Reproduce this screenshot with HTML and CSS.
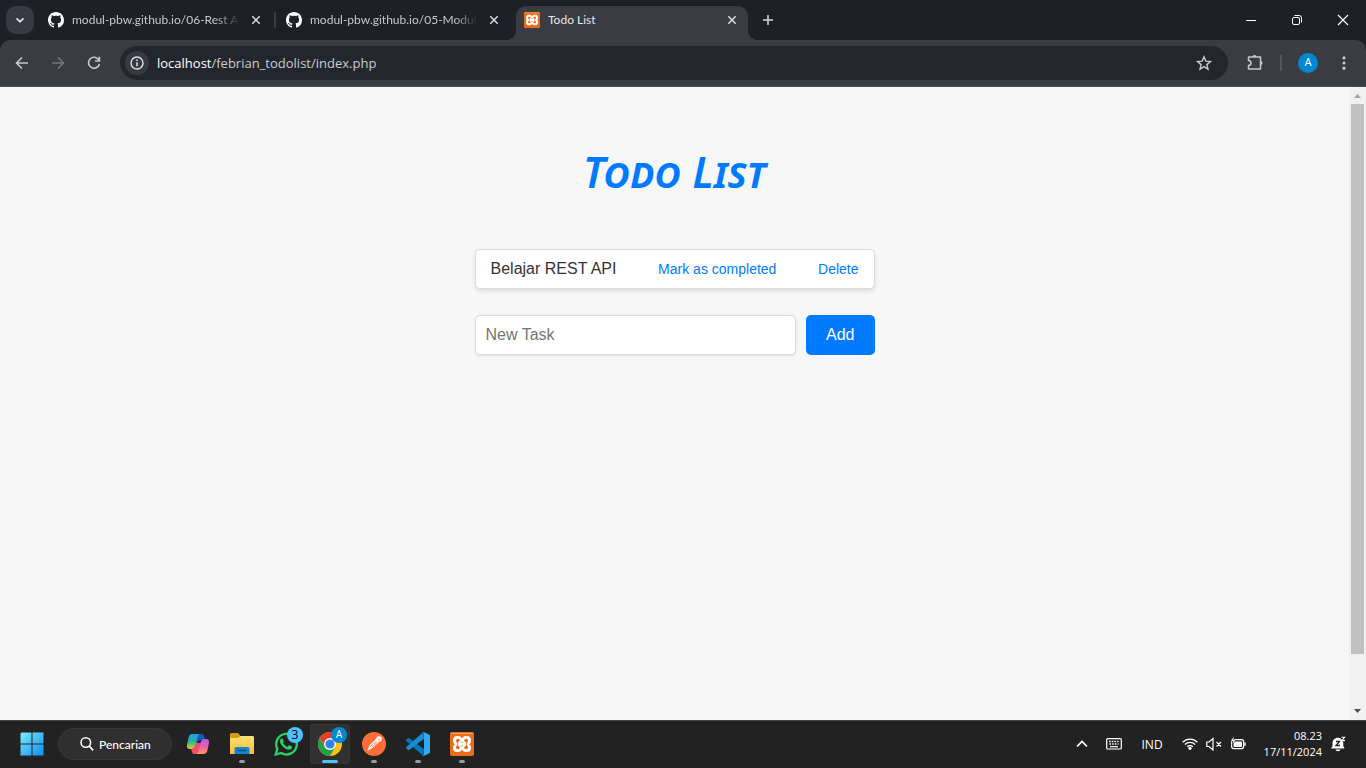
FILE: index.html
```html
<!DOCTYPE html>
<html lang="id">
<head>
<meta charset="utf-8">
<meta name="viewport" content="width=device-width, initial-scale=1">
<title>Todo List</title>
<link rel="stylesheet" href="styles.css">
</head>
<body class="desktop">
<svg class="sprite" aria-hidden="true">
  <defs>
    <linearGradient id="win" x1="0" y1="0" x2="1" y2="1"><stop offset="0" stop-color="#7bebff"/><stop offset="1" stop-color="#0d8ff0"/></linearGradient>
    <linearGradient id="cpa" x1="0" y1="0" x2="0" y2="1"><stop offset="0" stop-color="#1f9df0"/><stop offset=".5" stop-color="#27b59b"/><stop offset="1" stop-color="#efc51c"/></linearGradient>
    <linearGradient id="cpb" x1="0" y1="0" x2="0" y2="1"><stop offset="0" stop-color="#ad5df0"/><stop offset=".5" stop-color="#ec5ca8"/><stop offset="1" stop-color="#fb9a5a"/></linearGradient>
    <linearGradient id="fold" x1="0" y1="0" x2="0" y2="1"><stop offset="0" stop-color="#ffe07a"/><stop offset="1" stop-color="#f9bd2e"/></linearGradient>
  </defs>
  <symbol id="github" viewBox="0 0 16 16"><path fill="#fff" d="M8 0C3.58 0 0 3.58 0 8c0 3.54 2.29 6.53 5.47 7.59.4.07.55-.17.55-.38 0-.19-.01-.82-.01-1.49-2.01.37-2.53-.49-2.69-.94-.09-.23-.48-.94-.82-1.13-.28-.15-.68-.52-.01-.53.63-.01 1.08.58 1.23.82.72 1.21 1.87.87 2.33.66.07-.52.28-.87.51-1.07-1.78-.2-3.64-.89-3.64-3.95 0-.87.31-1.59.82-2.15-.08-.2-.36-1.02.08-2.12 0 0 .67-.21 2.2.82.64-.18 1.32-.27 2-.27s1.36.09 2 .27c1.53-1.04 2.2-.82 2.2-.82.44 1.1.16 1.92.08 2.12.51.56.82 1.27.82 2.15 0 3.07-1.87 3.75-3.65 3.95.29.25.54.73.54 1.48 0 1.07-.01 1.93-.01 2.2 0 .21.15.46.55.38A8.01 8.01 0 0 0 16 8c0-4.42-3.58-8-8-8z"/></symbol>
  <symbol id="close" viewBox="0 0 16 16"><path d="M4.300 4.300l7.400 7.400M11.700 4.300l-7.400 7.400" stroke="currentColor" stroke-width="1.500" fill="none"/></symbol>
  <symbol id="xampp" viewBox="0 0 24 24"><rect width="24" height="24" rx="2" fill="#e96c16"/><path d="M1 1.500h22" stroke="#f6a469"/><path fill="none" stroke="#fff" stroke-width="3" stroke-linejoin="round" d="M12 8.500L10.400 6.500Q9.700 5.500 8.500 5.500H7Q4.500 5.500 4.500 8.500 4.500 10.500 6 12 4.500 13.500 4.500 15.500 4.500 18.500 7 18.500H8.500Q9.700 18.500 10.400 17.500L12 15.500 13.600 17.500Q14.300 18.500 15.500 18.500H17Q19.500 18.500 19.500 15.500 19.500 13.500 18 12 19.500 10.500 19.500 8.500 19.500 5.500 17 5.500H15.500Q14.300 5.500 13.600 6.500zM9 9.500Q11 12 9 14.500M15 9.500Q13 12 15 14.500M10 12h4"/></symbol>
</svg>

<header class="tabstrip">
  <button class="tab-search" aria-label="Search tabs"><svg class="ic16" viewBox="0 0 16 16"><path d="M4.500 6.300L8 9.700l3.500-3.400" fill="none" stroke="#dcdde0" stroke-width="1.700"/></svg></button>
  <div class="tab divided">
    <svg class="ic16"><use href="#github"/></svg><span class="tab-title faded">modul-pbw.github.io/06-Rest A</span>
    <button class="tab-close" aria-label="Close tab"><svg class="ic16"><use href="#close"/></svg></button>
  </div>
  <div class="tab">
    <svg class="ic16"><use href="#github"/></svg><span class="tab-title faded">modul-pbw.github.io/05-Modul</span>
    <button class="tab-close" aria-label="Close tab"><svg class="ic16"><use href="#close"/></svg></button>
  </div>
  <div class="tab active">
    <svg class="ic16"><use href="#xampp"/></svg><span class="tab-title">Todo List</span>
    <button class="tab-close" aria-label="Close tab"><svg class="ic16"><use href="#close"/></svg></button>
  </div>
  <button class="new-tab" aria-label="New tab"><svg class="ic16" viewBox="0 0 16 16"><path d="M8 3v10M3 8h10" stroke="#d5d7db" stroke-width="1.500"/></svg></button>
  <div class="window-controls">
    <button aria-label="Minimize"><svg class="ic16" viewBox="0 0 16 16"><path d="M3 8.500h10" stroke="#fff"/></svg></button>
    <button aria-label="Restore"><svg class="ic16" viewBox="0 0 16 16" fill="none" stroke="#fff"><rect x="3.500" y="5.500" width="7" height="7" rx="1.500"/><path d="M5.500 3.500H10a2.500 2.500 0 0 1 2.500 2.500v4.500"/></svg></button>
    <button aria-label="Close window"><svg class="ic16" viewBox="0 0 16 16"><path d="M3 3l10 10M13 3L3 13" stroke="#fff" stroke-width="1.200"/></svg></button>
  </div>
</header>

<nav class="toolbar" aria-label="Browser toolbar">
  <button class="tool" aria-label="Back"><svg class="ic16" viewBox="0 0 16 16"><path d="M14 8H3M8 2.500L2.500 8 8 13.500" fill="none" stroke="#c7c9ce" stroke-width="1.600"/></svg></button>
  <button class="tool" aria-label="Forward"><svg class="ic16" viewBox="0 0 16 16"><path d="M2 8h11M8 2.500L13.500 8 8 13.500" fill="none" stroke="#74767c" stroke-width="1.600"/></svg></button>
  <button class="tool" aria-label="Reload"><svg class="ic16" viewBox="0 0 16 16"><path d="M12.700 4.800A5.500 5.500 0 1 0 13.400 9M13.400 1.800V6H9" fill="none" stroke="#c7c9ce" stroke-width="1.700"/></svg></button>
  <div class="omnibox">
    <button class="site-info" aria-label="Site information"><svg class="ic16" viewBox="0 0 16 16"><circle cx="8" cy="8" r="6" fill="none" stroke="#dfe0e3" stroke-width="1.400"/><path d="M8 7.200v4M8 4.500v1.500" stroke="#dfe0e3" stroke-width="1.500"/></svg></button>
    <a class="url" href="#"><span class="host">localhost</span>/febrian_todolist/index.php</a>
    <button class="star" aria-label="Bookmark"><svg class="ic16" viewBox="0 0 16 16"><path d="M8 1.800l1.800 4.300 4.700.4-3.600 3.100 1.100 4.600L8 11.700l-4 2.500 1.100-4.600-3.600-3.100 4.700-.4z" fill="none" stroke="#c7c9ce" stroke-width="1.400"/></svg></button>
  </div>
  <button class="tool" aria-label="Extensions"><svg class="ic18" viewBox="0 0 18 18"><path fill="none" stroke="#c7c9ce" stroke-width="1.500" stroke-linejoin="round" d="M2.500 3h12v12h-12v-3.500a2.300 2.300 0 0 0 0-5z"/><path fill="#c7c9ce" d="M6.500 3a2 2 0 0 1 4 0zM14.500 7a2 2 0 0 1 0 4z"/></svg></button>
  <span class="tool-divider"></span>
  <button class="profile" aria-label="Profile">A</button>
  <button class="tool menu" aria-label="Menu"><svg class="ic16" viewBox="0 0 16 16" fill="#c7c9ce"><circle cx="8" cy="2.800" r="1.600"/><circle cx="8" cy="8" r="1.600"/><circle cx="8" cy="13.200" r="1.600"/></svg></button>
</nav>

<div class="viewport">
  <main class="page">
    <h1 class="page-title">Todo List</h1>
    <ul class="tasks">
      <li class="task"><span class="task-name">Belajar REST API</span><a href="#">Mark as completed</a><a href="#">Delete</a></li>
    </ul>
    <form class="task-form">
      <input class="task-input" type="text" placeholder="New Task" aria-label="New Task">
      <button class="add" type="button">Add</button>
    </form>
  </main>
  <div class="scrollbar" aria-hidden="true">
    <svg class="arrow" viewBox="0 0 17 17"><path fill="#a3a3a3" d="M5 11l3.500-4 3.500 4z"/></svg>
    <span class="thumb"></span>
    <svg class="arrow" viewBox="0 0 17 17"><path fill="#505050" d="M5 6l3.500 4L12 6z"/></svg>
  </div>
</div>

<footer class="taskbar">
  <button class="app" aria-label="Start"><svg class="ic24" viewBox="0 0 24 24"><path fill="url(#win)" d="M1.500 .5h10v11H.5v-10zM12.500.5h11v11h-11zM.5 12.500h11v11h-11zM12.500 12.500h11v11h-11z"/></svg></button>
  <button class="search"><svg class="ic16" viewBox="0 0 16 16"><circle cx="6.800" cy="6.500" r="4.800" fill="none" stroke="#fff" stroke-width="1.500"/><path d="M10.200 10l4 4.300" stroke="#fff" stroke-width="1.700"/></svg><span>Pencarian</span></button>
  <button class="app" aria-label="Copilot"><svg class="ic24" viewBox="0 0 24 24"><path fill="#1657c8" d="M10 2h5.500c1.400 0 2.200.8 2.600 2.200L19 8h-4c-2 0-3 1-3.600 3L10 15H7z"/><path fill="url(#cpa)" d="M6.500 2H14c-1.400.2-2 1.400-2.400 2.800L9.200 14c-.5 1.800-1.500 3-3.500 3H4c-2.600 0-3.500-1.800-3-4l1.600-7.500C3.100 3.200 4.400 2 6.500 2z"/><path fill="#f0506e" d="M14 22H8.500c-1.400 0-2.200-.8-2.600-2.200L5.300 17c2.200 0 3.400-1 3.900-3l1-3H17z"/><path fill="url(#cpb)" d="M17.500 22H10c1.400-.2 2-1.400 2.400-2.800L14.800 10c.5-1.800 1.500-3 3.500-3H20c2.600 0 3.500 1.800 3 4l-1.600 7.500c-.5 2.300-1.800 3.500-3.900 3.500z"/></svg></button>
  <button class="app running" aria-label="File Explorer"><svg class="ic24" viewBox="0 0 24 24"><path fill="#d89a10" d="M0 2.500C0 1.700.7 1 1.500 1H8l2.500 3v3H0z"/><path fill="url(#fold)" d="M0 6h8l2.500-2H22.500c.9 0 1.500.6 1.500 1.500V22H0z"/><path fill="#1684d5" d="M4.500 22v-4.500c0-2 .8-2.500 2.500-2.500h10c1.700 0 2.500.5 2.500 2.500V22z"/><path stroke="#0c4d91" stroke-width="1.500" d="M7.500 18.500h9"/></svg></button>
  <button class="app" aria-label="WhatsApp"><svg class="ic24" viewBox="0 0 24 24"><path fill="none" stroke="#28d366" stroke-width="2.300" d="M1.700 22.500l1.600-5.700A10.300 10.300 0 1 1 7.200 21z"/><path fill="#28d366" d="M17.500 14.300c-.3-.2-1.800-.9-2.100-1-.3-.1-.5-.1-.7.200l-.9 1.200c-.2.200-.4.200-.7.100-1.800-.8-3.100-1.900-4.100-3.700-.2-.4.100-.5.800-1.400.1-.2 0-.4 0-.5L8.900 7c-.3-.6-.5-.5-.7-.5-.6 0-1 0-1.400.5C6 7.900 5.700 8.900 6 10c.8 3.200 4.100 6.500 7.800 7.600 1.600.5 3.800-.3 4.100-1.800.1-.5.100-1.200-.4-1.500z"/></svg><span class="badge count">3</span></button>
  <button class="app current" aria-label="Google Chrome"><svg class="ic24" viewBox="0 0 24 24"><circle cx="12" cy="12" r="12" fill="#fbc116"/><path fill="#e43e2b" d="M1.600 6A12 12 0 0 1 22.400 6H12L6.800 15z"/><path fill="#269e4b" d="M1.600 6A12 12 0 0 0 12 24l5.200-9L12 12l-5.200 3z"/><circle cx="12" cy="12" r="6" fill="#fff"/><circle cx="12" cy="12" r="4.600" fill="#3280ee"/></svg><span class="badge account">A</span></button>
  <button class="app running" aria-label="Postman"><svg class="ic24" viewBox="0 0 24 24"><circle cx="12" cy="12" r="12" fill="#ff6c37"/><path fill="#fff" d="M5 19l3-6.500 6-5.500 3 3-6.500 6z"/><circle cx="17" cy="7" r="2.800" fill="#fff"/><path d="M8 14.500l6.500-5.500M10 15l5.500-5M16 7.500l2 .5" stroke="#ff6c37" stroke-width=".8"/></svg></button>
  <button class="app running" aria-label="Visual Studio Code"><svg class="ic24" viewBox="0 0 24 24"><path fill="#0877bb" d="M1.800 6.300L.3 7.700c-.5.500-.4 1 0 1.400L17.500 24l.5-6.800L3.300 6.300c-.5-.4-1-.4-1.500 0z"/><path fill="#168dd8" d="M1.800 17.700L.3 16.300c-.5-.5-.4-1 0-1.400L17.500 0l.5 6.800L3.300 17.700c-.5.400-1 .4-1.500 0z"/><path fill="#32a8f0" d="M17.500 0L23 2.600c.6.300 1 .8 1 1.500v15.800c0 .7-.4 1.200-1 1.500L17.500 24c-.6 0-.9-.3-.9-1 .8.600 1.400.1 1.400-.8V1.800c0-.9-.6-1.400-1.400-.8 0-.7.300-1 .9-1z"/></svg></button>
  <button class="app running" aria-label="XAMPP"><svg class="ic24"><use href="#xampp"/></svg></button>

  <div class="tray">
    <button aria-label="Show hidden icons"><svg class="ic16" viewBox="0 0 16 16"><path d="M3 10.500l5-5 5 5" fill="none" stroke="#fff" stroke-width="1.700"/></svg></button>
    <button aria-label="Touch keyboard"><svg class="ic16" viewBox="0 0 16 16"><rect x=".7" y="2.700" width="14.600" height="10.300" rx="1" fill="none" stroke="#fff" stroke-width="1.200"/><path d="M3 5.500h10M3.500 8h9" stroke="#fff" stroke-width="1.400" stroke-dasharray="1.500 1.200"/><path d="M4 10.700h8" stroke="#fff" stroke-width="1.200"/></svg></button>
    <button class="lang">IND</button>
    <button class="status" aria-label="Network, volume, battery">
      <svg class="ic16" viewBox="0 0 16 16"><path fill="none" stroke="#fff" stroke-width="1.300" d="M.6 6.200C4.800 2 11.200 2 15.400 6.200M2.900 8.500c2.900-2.900 7.300-2.900 10.200 0M5.200 10.800c1.600-1.600 4-1.600 5.600 0"/><circle cx="8" cy="12.300" r="1.600" fill="#fff"/></svg>
      <svg class="ic16" viewBox="0 0 16 16" fill="none" stroke="#fff" stroke-width="1.200"><path d="M.8 6v4.500H3L7 14V2.500L3 6zM10.500 6l4.500 4.500M15 6l-4.500 4.500"/></svg>
      <svg class="ic16" viewBox="0 0 16 16"><rect x="1.600" y="3.600" width="12" height="9" rx="2" fill="none" stroke="#fff" stroke-width="1.200"/><rect x="3.500" y="5.500" width="8.500" height="5.500" rx="1" fill="#fff"/><path d="M14.300 6.500h1.400v3.200h-1.400z" fill="#fff"/><path d="M4 0L.5 5.300H3L2 9l4-5H3.600z" fill="#fff" stroke="#222" stroke-width=".5"/></svg>
    </button>
    <button class="clock"><time datetime="2024-11-17T08:23">08.23<br>17/11/2024</time></button>
    <button aria-label="Notifications"><svg class="ic16" viewBox="0 0 16 16"><path fill="#fff" d="M2.500 7.500C2.500 4 5 1.800 8 1.800c3.300 0 5.300 2.500 5.300 5.700v2.800l1.300 2.200H1l1.500-2.200zM5.500 13.500h5c-.6 2.200-4.400 2.200-5 0z"/><path d="M6 5.500h3.500l-3.500 4h4" fill="none" stroke="#222" stroke-width="1.300"/><path d="M10 0h6v6h-3z" fill="#222"/><path d="M11.500 1.300h3L12 4.600h3" fill="none" stroke="#fff" stroke-width="1.100"/></svg></button>
  </div>
</footer>
</body>
</html>
```
FILE: styles.css
```css
* { box-sizing: border-box; }

.desktop {
  margin: 0;
  min-height: 100vh;
  display: grid;
  grid-template-rows: auto auto 1fr auto;
  font-family: "Segoe UI", "Open Sans", sans-serif;
  font-size: 12px;
  background: #1d2027;
}

button { border: 0; padding: 0; background: none; color: inherit; font: inherit; }
svg { display: block; flex: none; }
.sprite { position: absolute; width: 0; height: 0; }
.ic16 { width: 16px; height: 16px; }
.ic18 { width: 18px; height: 18px; }
.ic24 { width: 24px; height: 24px; }

/* Tab strip */
.tabstrip {
  display: flex;
  gap: 6px;
  height: 40px;
  padding: 6px 0 0 6px;
  color: #c5c7cc;
}
.tab-search {
  width: 28px;
  height: 28px;
  display: grid;
  place-items: center;
  border-radius: 10px;
  background: #383a43;
}
.tab {
  position: relative;
  display: flex;
  align-items: center;
  gap: 8px;
  flex: 0 1 232px;
  min-width: 0;
  height: 34px;
  padding: 0 8px 6px;
}
.tab-title {
  flex: 1;
  min-width: 0;
  overflow: hidden;
  white-space: nowrap;
  font-family: "Segoe UI", Lato, sans-serif;
  line-height: 20px;
}
.tab-title.faded { mask-image: linear-gradient(to right, #000 calc(100% - 24px), transparent); }
.tab-close { color: #dcdde0; }
.tab.divided::after {
  content: "";
  position: absolute;
  right: -4px;
  top: 6px;
  width: 2px;
  height: 16px;
  background: #3b3d46;
}
.tab.active { background: #3a3b43; border-radius: 10px 10px 0 0; color: #e5e6e9; }
.tab.active::before, .tab.active::after {
  content: "";
  position: absolute;
  bottom: 0;
  width: 10px;
  height: 10px;
}
.tab.active::before { left: -10px; background: radial-gradient(circle at 0 0, transparent 10px, #3a3b43 10px); }
.tab.active::after { right: -10px; background: radial-gradient(circle at 100% 0, transparent 10px, #3a3b43 10px); }
.new-tab { display: grid; place-items: center; width: 28px; height: 28px; }
.window-controls { display: flex; margin-left: auto; height: 28px; }
.window-controls button { width: 46px; display: grid; place-items: center; }

/* Toolbar */
.toolbar {
  display: flex;
  align-items: center;
  height: 47px;
  padding: 0 8px 0 4px;
  background: #3a3b43;
  border-bottom: 1px solid #4b4c54;
  border-radius: 10px 10px 0 0;
}
.tool { width: 36px; height: 34px; display: grid; place-items: center; }
.omnibox {
  flex: 1;
  display: flex;
  align-items: center;
  height: 34px;
  margin: 0 9px 0 8px;
  padding: 0 16px 0 5px;
  border-radius: 17px;
  background: #24262e;
}
.site-info { width: 24px; height: 24px; display: grid; place-items: center; border-radius: 50%; background: #383a43; }
.url { flex: 1; margin-left: 8px; font-size: 13px; line-height: 20px; color: #c9cbd0; text-decoration: none; }
.host { color: #fff; }
.tool-divider { width: 2px; height: 16px; margin-left: 7px; background: #54565e; }
.profile { width: 20px; height: 20px; margin: 0 12px 0 16px; border-radius: 50%; background: #0288d1; color: #fff; font: 11px/20px Roboto, sans-serif; }
.menu { width: 28px; }

/* Web page */
.viewport { display: flex; min-height: 0; background: #f7f7f7; }
.page {
  flex: 1;
  display: flex;
  flex-direction: column;
  align-items: center;
  padding: 50px 20px;
  font-family: "Liberation Sans", Arial, sans-serif;
  font-size: 16px;
  color: #333;
}
.page-title {
  margin: 0 0 42px;
  font-family: "Rock Salt", "Noto Sans", cursive;
  font-size: 43px;
  line-height: 70px;
  font-weight: 600;
  font-style: italic;
  font-variant: small-caps;
  color: #007bff;
}
.tasks { width: 100%; max-width: 400px; margin: 0 0 26px; padding: 0; list-style: none; }
.task {
  display: flex;
  align-items: center;
  justify-content: space-between;
  height: 40px;
  padding: 0 15px;
  border: 1px solid #ddd;
  border-radius: 5px;
  background: #fff;
  box-shadow: 0 2px 4px rgba(0, 0, 0, .1);
}
.task a { font-size: 14px; color: #007bff; text-decoration: none; }
.task-form { display: flex; gap: 10px; width: 100%; max-width: 400px; }
.task-input {
  flex: 1;
  min-width: 0;
  height: 40px;
  padding: 10px;
  border: 1px solid #ddd;
  border-radius: 5px;
  background: #fff;
  box-shadow: 0 1px 3px rgba(0, 0, 0, .1);
  font: inherit;
}
.task-input::placeholder { color: #757575; }
.add { padding: 0 20px; border-radius: 5px; background: #007bff; color: #fff; }

.scrollbar { display: flex; flex-direction: column; align-items: center; width: 17px; background: #f1f1f1; }
.arrow { width: 17px; height: 17px; }
.thumb { flex: 0 1 550px; width: 13px; background: #c1c1c1; }
.thumb + .arrow { margin-top: auto; }

/* Taskbar */
.taskbar {
  display: flex;
  align-items: center;
  gap: 4px;
  height: 48px;
  padding: 0 12px;
  background: #222;
  box-shadow: inset 0 1px 0 #454745;
  color: #fff;
}
.app { position: relative; width: 40px; height: 40px; display: grid; place-items: center; border-radius: 4px; }
.app.current { background: #303030; box-shadow: inset 0 0 0 1px #373737; }
.app.running::after, .app.current::after {
  content: "";
  position: absolute;
  bottom: 1px;
  left: 50%;
  width: 6px;
  height: 3px;
  border-radius: 2px;
  background: #999;
  transform: translateX(-50%);
}
.app.current::after { width: 16px; background: #4cc2ff; }
.badge { position: absolute; top: 3px; right: 3px; width: 16px; height: 16px; border-radius: 50%; text-align: center; line-height: 16px; }
.badge.count { background: #4cc2ff; color: #000; font-size: 12px; }
.badge.account { background: #0288d1; font-family: Roboto, sans-serif; font-size: 10px; }
.search {
  display: flex;
  align-items: center;
  gap: 4px;
  width: 114px;
  height: 32px;
  margin: 0 2px;
  padding: 0 20px;
  border: 1px solid #383838;
  border-radius: 16px;
  background: #2f2f2f;
  font-family: "Segoe UI", Lato, sans-serif;
  font-weight: 500;
}
.tray { display: flex; align-items: center; margin-left: auto; padding-right: 8px; }
.tray button + button { margin-left: 16px; }
.tray .lang { margin-left: 20px; }
.tray .status { display: flex; gap: 8px; margin-left: 19px; }
.tray .clock { margin-left: 18px; text-align: right; font-size: 11px; font-weight: 500; line-height: 16px; }
.tray .clock + button { margin-left: 8px; }
```
